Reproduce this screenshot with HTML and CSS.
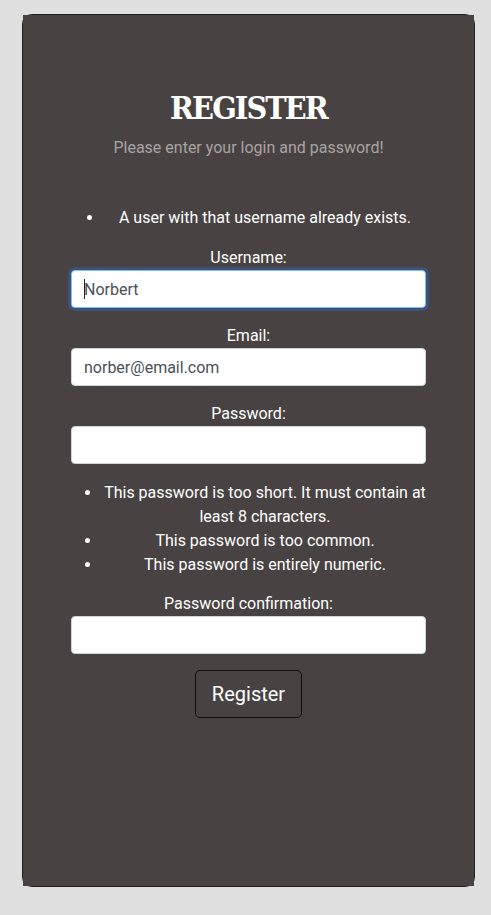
FILE: index.html
```html
<!DOCTYPE html>
<html lang="en">
<head>
<meta charset="utf-8">
<title>Register</title>
<link rel="stylesheet" href="styles.css">
</head>
<body>
<div class="card">
  <div class="card-body">
    <h1 class="title">REGISTER</h1>
    <p class="subtitle">Please enter your login and password!</p>
    <form class="form">
      <ul class="errorlist">
        <li>A user with that username already exists.</li>
      </ul>
      <div class="group">
        <label class="label" for="u">Username:</label>
        <div class="field-wrap">
          <input class="control focused" id="u" type="text" value="Norbert">
          <span class="caret"></span>
        </div>
      </div>
      <div class="group">
        <label class="label" for="e">Email:</label>
        <input class="control" id="e" type="text" value="norber@email.com">
      </div>
      <div class="group tight">
        <label class="label" for="p">Password:</label>
        <input class="control" id="p" type="password">
      </div>
      <ul class="errorlist pw">
        <li>This password is too short. It must contain at least 8 characters.</li>
        <li>This password is too common.</li>
        <li>This password is entirely numeric.</li>
      </ul>
      <div class="group">
        <label class="label" for="p2">Password confirmation:</label>
        <input class="control" id="p2" type="password">
      </div>
      <div class="actions">
        <button class="btn" type="button">Register</button>
      </div>
    </form>
  </div>
</div>
</body>
</html>
```
FILE: styles.css
```css
html, body {
  margin: 0;
  padding: 0;
  background: #dfdfdf;
}
body {
  font-family: Roboto, "Liberation Sans", sans-serif;
  font-size: 16px;
  line-height: 1.5;
  color: #ffffff;
  padding: 14px 16px 0 22px;
  height: 915px;
  box-sizing: border-box;
}
.card {
  width: 451px;
  height: 871px;
  border: 1px solid #1f1d1d;
  border-radius: 10px;
}
.card-body {
  background: #484242;
  height: 100%;
  box-sizing: border-box;
  padding: 75px 48px 0 48px;
  text-align: center;
}
.title {
  margin: 0;
  font-family: "DejaVu Serif Condensed", "DejaVu Serif", serif;
  font-weight: bold;
  font-size: 32px;
  line-height: 36px;
  letter-spacing: -1.9px;
  color: #ffffff;
}
.subtitle {
  margin: 0;
  padding-top: 10px;
  color: #a8a4a4;
  font-size: 16px;
  line-height: 24px;
}
.form {
  margin-top: 46px;
}
.errorlist {
  margin: 0 0 16px 0;
  padding: 0 0 0 33px;
  text-align: center;
}
.errorlist.pw {
  margin: 0 -2px 15px 0;
  padding-left: 31px;
}
.group {
  margin-bottom: 16px;
}
.group.tight {
  margin-bottom: 17px;
}
.label {
  display: block;
  margin-bottom: 0;
}
.field-wrap {
  position: relative;
}
.control {
  display: block;
  width: 100%;
  height: 38px;
  box-sizing: border-box;
  padding: 6px 12px;
  font-family: Roboto, "Liberation Sans", sans-serif;
  font-size: 16px;
  line-height: 24px;
  color: #495057;
  background: #ffffff;
  border: 1px solid #ced4da;
  border-radius: 4px;
  outline: none;
}
.control.focused {
  border-color: #80bdff;
  box-shadow: 0 0 0 3px #3e5278;
}
.caret {
  position: absolute;
  left: 13px;
  top: 9px;
  width: 1px;
  height: 20px;
  background: #222222;
}
.actions {
  padding-top: 0;
}
.btn {
  font-family: Roboto, "Liberation Sans", sans-serif;
  font-size: 20px;
  line-height: 30px;
  padding: 8px 16px;
  color: #ffffff;
  background: #484242;
  border: 1px solid #111111;
  border-radius: 5px;
}
```
